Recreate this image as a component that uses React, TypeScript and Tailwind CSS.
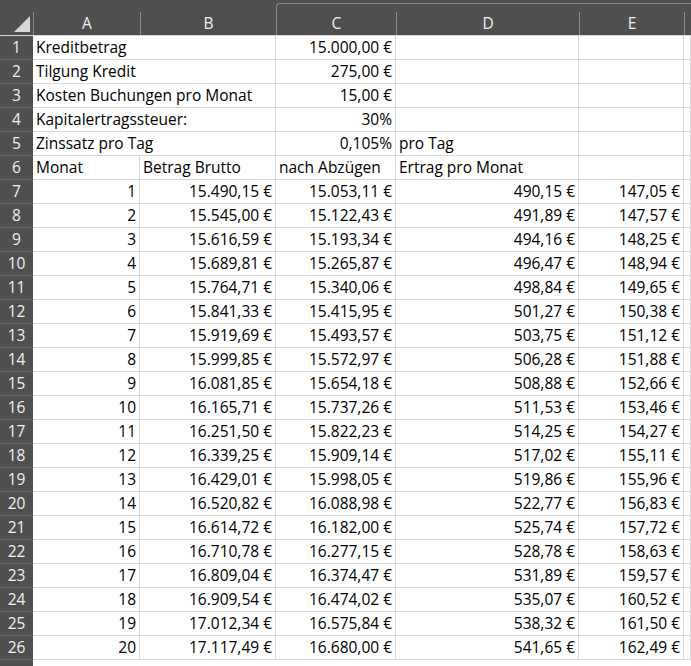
import React from 'react';

// Kredit sheet, rendered like an Excel grid
const months: [string, string, string, string][] = [
  ['15.490,15 €', '15.053,11 €', '490,15 €', '147,05 €'],
  ['15.545,00 €', '15.122,43 €', '491,89 €', '147,57 €'],
  ['15.616,59 €', '15.193,34 €', '494,16 €', '148,25 €'],
  ['15.689,81 €', '15.265,87 €', '496,47 €', '148,94 €'],
  ['15.764,71 €', '15.340,06 €', '498,84 €', '149,65 €'],
  ['15.841,33 €', '15.415,95 €', '501,27 €', '150,38 €'],
  ['15.919,69 €', '15.493,57 €', '503,75 €', '151,12 €'],
  ['15.999,85 €', '15.572,97 €', '506,28 €', '151,88 €'],
  ['16.081,85 €', '15.654,18 €', '508,88 €', '152,66 €'],
  ['16.165,71 €', '15.737,26 €', '511,53 €', '153,46 €'],
  ['16.251,50 €', '15.822,23 €', '514,25 €', '154,27 €'],
  ['16.339,25 €', '15.909,14 €', '517,02 €', '155,11 €'],
  ['16.429,01 €', '15.998,05 €', '519,86 €', '155,96 €'],
  ['16.520,82 €', '16.088,98 €', '522,77 €', '156,83 €'],
  ['16.614,72 €', '16.182,00 €', '525,74 €', '157,72 €'],
  ['16.710,78 €', '16.277,15 €', '528,78 €', '158,63 €'],
  ['16.809,04 €', '16.374,47 €', '531,89 €', '159,57 €'],
  ['16.909,54 €', '16.474,02 €', '535,07 €', '160,52 €'],
  ['17.012,34 €', '16.575,84 €', '538,32 €', '161,50 €'],
  ['17.117,49 €', '16.680,00 €', '541,65 €', '162,49 €'],
];

type Cell = { t?: string; r?: boolean; span?: number };

const rows: Cell[][] = [
  [{ t: 'Kreditbetrag', span: 2 }, { t: '15.000,00 €', r: true }, {}, {}, {}],
  [{ t: 'Tilgung Kredit', span: 2 }, { t: '275,00 €', r: true }, {}, {}, {}],
  [{ t: 'Kosten Buchungen pro Monat', span: 2 }, { t: '15,00 €', r: true }, {}, {}, {}],
  [{ t: 'Kapitalertragssteuer:', span: 2 }, { t: '30%', r: true }, {}, {}, {}],
  [{ t: 'Zinssatz pro Tag', span: 2 }, { t: '0,105%', r: true }, { t: 'pro Tag' }, {}, {}],
  [{ t: 'Monat' }, { t: 'Betrag Brutto' }, { t: 'nach Abzügen' }, { t: 'Ertrag pro Monat' }, {}, {}],
  ...months.map((m, i) => [
    { t: String(i + 1), r: true },
    { t: m[0], r: true },
    { t: m[1], r: true },
    { t: m[2], r: true },
    { t: m[3], r: true },
    {},
  ]),
];

const cols = 'grid grid-cols-[33px_107px_136px_120px_183px_105px_1fr]';

export default function App() {
  return (
    <div className="w-[691px] h-[666px] overflow-hidden bg-white text-[15.5px] text-black" style={{ fontFamily: '"Open Sans", "Liberation Sans", sans-serif' }}>
      {/* title strip */}
      <div className="h-[12px] bg-[#4f4f4f] flex">
        <div className="w-[276px]" />
        <div className="flex-1 mt-[3px] border-t border-l border-[#8a8a8a] rounded-tl-[4px]" />
      </div>
      {/* column headers */}
      <div className={`${cols} h-[24px] bg-[#4f4f4f] text-[#f0f0f0] border-b border-[#d4d4d4]`}>
        <div className="relative">
          <svg className="absolute right-[3px] bottom-[3px]" width="16" height="16" viewBox="0 0 16 16">
            <polygon points="16,0 16,16 0,16" fill="#d8d8d8" />
          </svg>
        </div>
        {['A', 'B', 'C', 'D', 'E', ''].map((c, i) => (
          <div key={i} className="flex items-center justify-center border-l border-[#8a8a8a] leading-none">{c}</div>
        ))}
      </div>
      {rows.map((row, ri) => (
        <div key={ri} className={`${cols} h-[24px]`}>
          <div className="bg-[#4f4f4f] text-[#f0f0f0] flex items-center justify-center border-b border-[#6a6a6a] leading-none">{ri + 1}</div>
          {row.map((c, ci) => (
            <div
              key={ci}
              className={`${c.span === 2 ? 'col-span-2' : ''} border-r border-b border-[#d9d9d9] flex items-center px-[3px] whitespace-nowrap leading-none ${c.r ? 'justify-end' : ''}`}
            >
              {c.t}
            </div>
          ))}
        </div>
      ))}
      <div className={`${cols} h-[24px]`}>
        <div className="bg-[#4f4f4f]" />
      </div>
    </div>
  );
}
